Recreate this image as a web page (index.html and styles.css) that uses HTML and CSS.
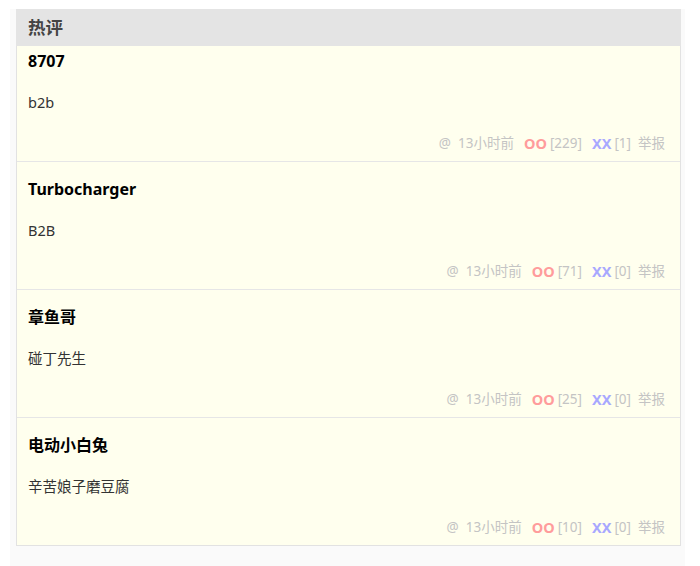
FILE: index.html
```html
<!DOCTYPE html>
<html lang="zh-CN">
<head>
<meta charset="utf-8">
<title>热评</title>
<link rel="stylesheet" href="styles.css">
</head>
<body>
<div class="wrap">
  <div class="panel">
    <div class="panel-head">热评</div>
    <div class="item first">
      <div class="name">8707</div>
      <div class="text">b2b</div>
      <div class="meta"><span class="at">@&nbsp; 13小时前</span><span class="oo">OO</span><span class="cnt">[229]</span><span class="xx">XX</span><span class="cnt">[1]</span><span class="report">举报</span></div>
    </div>
    <div class="item">
      <div class="name">Turbocharger</div>
      <div class="text">B2B</div>
      <div class="meta"><span class="at">@&nbsp; 13小时前</span><span class="oo">OO</span><span class="cnt">[71]</span><span class="xx">XX</span><span class="cnt">[0]</span><span class="report">举报</span></div>
    </div>
    <div class="item">
      <div class="name">章鱼哥</div>
      <div class="text">碰丁先生</div>
      <div class="meta"><span class="at">@&nbsp; 13小时前</span><span class="oo">OO</span><span class="cnt">[25]</span><span class="xx">XX</span><span class="cnt">[0]</span><span class="report">举报</span></div>
    </div>
    <div class="item">
      <div class="name">电动小白兔</div>
      <div class="text">辛苦娘子磨豆腐</div>
      <div class="meta"><span class="at">@&nbsp; 13小时前</span><span class="oo">OO</span><span class="cnt">[10]</span><span class="xx">XX</span><span class="cnt">[0]</span><span class="report">举报</span></div>
    </div>
  </div>
</div>
</body>
</html>
```
FILE: styles.css
```css
html, body {
  margin: 0;
  padding: 0;
  background: #ffffff;
}
body {
  font-family: "Noto Sans", "Noto Sans CJK SC", sans-serif;
  color: #333;
}
.wrap {
  margin: 9px 15px 0 10px;
  padding: 0 4px 30px 6px;
  background: #fafafa;
}
.panel {
  border: 1px solid #e2e2e2;
  border-top: none;
  background: #ffffee;
}
.panel-head {
  height: 37px;
  line-height: 37px;
  background: #e4e4e4;
  font-size: 17.5px;
  font-weight: bold;
  color: #444;
  margin: 0 -1px;
  padding-left: 12px;
}
.item {
  padding: 15px 15px 8px 11px;
  border-top: 1px solid #e6e6e6;
}
.item.first {
  border-top: none;
  padding-top: 3px;
}
.name {
  font-size: 16px;
  font-weight: bold;
  color: #000;
  line-height: 24px;
}
.text {
  margin-top: 19px;
  font-size: 14.5px;
  line-height: 20px;
  color: #333;
}
.meta {
  margin-top: 21px;
  font-size: 13.5px;
  line-height: 20px;
  color: #c4c4c4;
  display: flex;
  justify-content: flex-end;
}
.meta .oo {
  color: #ff9c9c;
  font-weight: bold;
  font-size: 14.5px;
  margin-left: 10px;
  margin-right: 3px;
}
.meta .xx {
  color: #a8a8ff;
  font-weight: bold;
  font-size: 14.5px;
  margin-left: 10px;
  margin-right: 3px;
}
.meta .report {
  margin-left: 7px;
}
```
